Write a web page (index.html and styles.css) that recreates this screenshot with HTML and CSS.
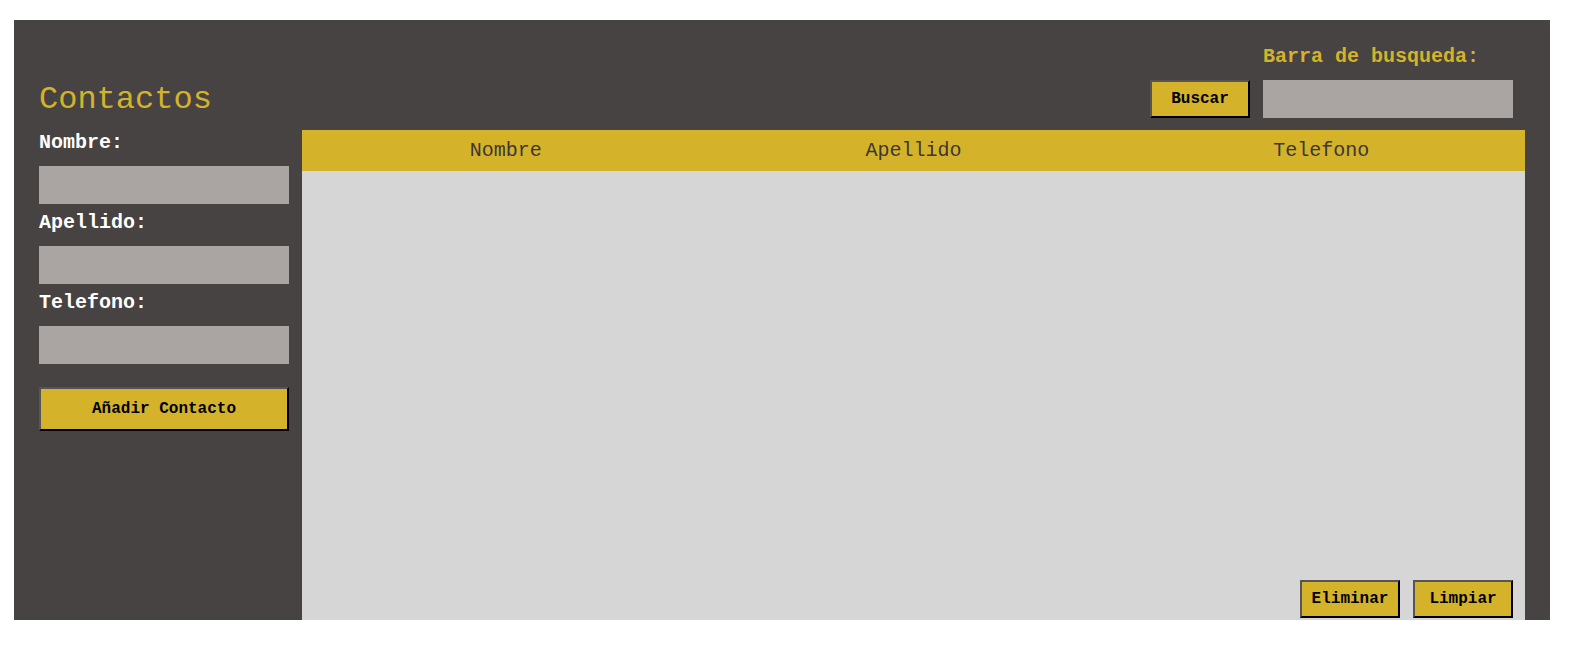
FILE: index.html
```html
<!DOCTYPE html>
<html lang="es">
<head>
<meta charset="utf-8">
<title>Contactos</title>
<link rel="stylesheet" href="styles.css">
</head>
<body>
<div class="app">
  <header class="top">
    <h1 class="title">Contactos</h1>
    <div class="search">
      <label class="search-label" for="q">Barra de busqueda:</label>
      <button class="btn btn-small" type="button">Buscar</button>
      <input class="field" id="q" type="text">
    </div>
  </header>
  <div class="main">
    <form class="side">
      <label class="label" for="nombre">Nombre:</label>
      <input class="field" id="nombre" type="text">
      <label class="label" for="apellido">Apellido:</label>
      <input class="field" id="apellido" type="text">
      <label class="label" for="telefono">Telefono:</label>
      <input class="field" id="telefono" type="text">
      <button class="btn btn-wide" type="button">Añadir Contacto</button>
    </form>
    <section class="table">
      <div class="thead">
        <div class="th">Nombre</div>
        <div class="th">Apellido</div>
        <div class="th">Telefono</div>
      </div>
      <div class="tbody"></div>
      <div class="actions">
        <button class="btn btn-small" type="button">Eliminar</button>
        <button class="btn btn-small" type="button">Limpiar</button>
      </div>
    </section>
  </div>
</div>
</body>
</html>
```

FILE: styles.css
```css
* { box-sizing: border-box; }

body {
  margin: 0;
  background: #ffffff;
  font-family: "Courier New", "Nimbus Mono PS", "Nimbus Mono L", "FreeMono", "Liberation Mono", monospace;
}

.app {
  margin: 20px 30px 0 14px;
  height: 600px;
  background: #484343;
  padding: 0 25px;
  display: flex;
  flex-direction: column;
}

.top {
  height: 110px;
  display: flex;
  justify-content: space-between;
  align-items: flex-end;
  padding-bottom: 12px;
}

.title {
  margin: 0;
  font-size: 32px;
  font-weight: normal;
  color: #d4b32a;
  line-height: normal;
}

.search {
  display: grid;
  grid-template-columns: 100px 250px;
  column-gap: 13px;
  margin-right: 12px;
}

.search-label {
  grid-column: 2;
  grid-row: 1;
  color: #d4b32a;
  font-size: 20px;
  font-weight: bold;
  margin-bottom: 12px;
}

.search .btn { grid-column: 1; grid-row: 2; }
.search .field { grid-column: 2; grid-row: 2; }

.field {
  display: block;
  width: 250px;
  height: 38px;
  border: none;
  background: #aaa4a3;
  margin: 0;
  padding: 0 8px;
  font-family: inherit;
}

.btn {
  background: #d4b32a;
  color: #000;
  font-family: inherit;
  font-weight: bold;
  font-size: 16px;
  border-style: solid;
  border-width: 2px;
  border-color: #555 #000 #000 #555;
  padding: 0;
  margin: 0;
}

.btn-small {
  width: 100px;
  height: 38px;
}

.btn-wide {
  width: 250px;
  height: 44px;
  margin-top: 23px;
}

.main {
  flex: 1;
  display: flex;
  gap: 13px;
  min-height: 0;
}

.side {
  width: 250px;
  display: flex;
  flex-direction: column;
  padding-top: 1px;
}

.label {
  color: #ffffff;
  font-size: 20px;
  font-weight: bold;
  margin-bottom: 12px;
}

.side .field { margin-bottom: 7px; }
.side .field:last-of-type { margin-bottom: 0; }

.table {
  flex: 1;
  background: #d6d6d6;
  display: flex;
  flex-direction: column;
}

.thead {
  height: 41px;
  background: #d4b32a;
  display: grid;
  grid-template-columns: 1fr 1fr 1fr;
  align-items: center;
}

.th {
  text-align: center;
  font-size: 20px;
  color: #3e3636;
}

.tbody { flex: 1; }

.actions {
  display: flex;
  justify-content: flex-end;
  gap: 13px;
  padding: 0 12px 2px 0;
}
```
